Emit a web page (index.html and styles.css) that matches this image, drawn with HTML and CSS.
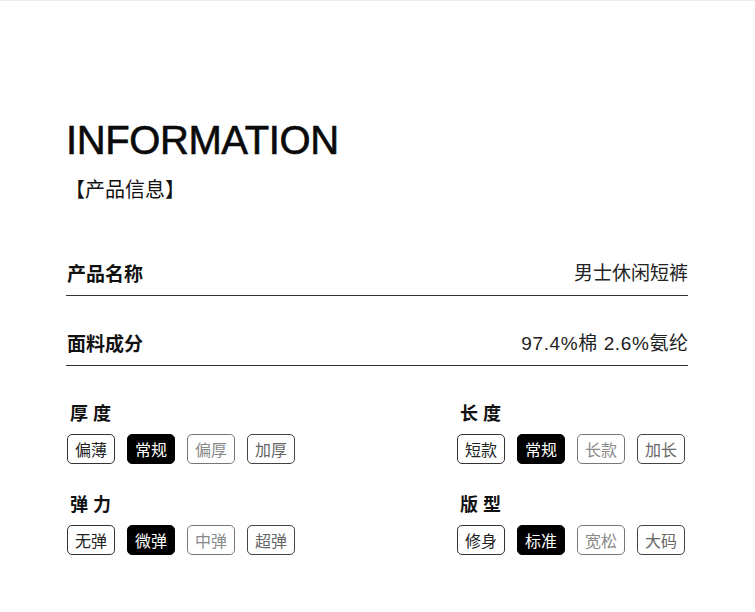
FILE: index.html
```html
<!DOCTYPE html>
<html lang="zh-CN">
<head>
<meta charset="utf-8">
<title>INFORMATION</title>
<link rel="stylesheet" href="styles.css">
</head>
<body>
<div class="page">
  <h1 class="title">INFORMATION</h1>
  <div class="subtitle">【产品信息】</div>

  <div class="row row-first">
    <span class="label">产品名称</span>
    <span class="value">男士休闲短裤</span>
  </div>
  <div class="row row-second">
    <span class="label">面料成分</span>
    <span class="value value-wide">97.4%棉 2.6%氨纶</span>
  </div>

  <div class="grid">
    <div class="group">
      <div class="group-title">厚 度</div>
      <div class="tags">
        <span class="tag">偏薄</span>
        <span class="tag tag-on">常规</span>
        <span class="tag tag-light">偏厚</span>
        <span class="tag tag-mid">加厚</span>
      </div>
    </div>
    <div class="group">
      <div class="group-title">长 度</div>
      <div class="tags">
        <span class="tag">短款</span>
        <span class="tag tag-on">常规</span>
        <span class="tag tag-light">长款</span>
        <span class="tag tag-mid">加长</span>
      </div>
    </div>
    <div class="group">
      <div class="group-title">弹 力</div>
      <div class="tags">
        <span class="tag">无弹</span>
        <span class="tag tag-on">微弹</span>
        <span class="tag tag-light">中弹</span>
        <span class="tag tag-mid">超弹</span>
      </div>
    </div>
    <div class="group">
      <div class="group-title">版 型</div>
      <div class="tags">
        <span class="tag">修身</span>
        <span class="tag tag-on">标准</span>
        <span class="tag tag-light">宽松</span>
        <span class="tag tag-mid">大码</span>
      </div>
    </div>
  </div>
</div>
</body>
</html>
```

FILE: styles.css
```css
html, body {
  margin: 0;
  padding: 0;
  background: #ffffff;
}

body {
  font-family: "Liberation Sans", "Noto Sans CJK SC", sans-serif;
  color: #111;
  border-top: 1px solid #eeeeee;
}

.page {
  width: 622px;
  padding: 0 0 0 66px;
}

.title {
  margin: 115px 0 0 0;
  font-size: 40px;
  line-height: 48px;
  font-weight: normal;
  color: #0a0a0a;
  letter-spacing: -0.4px;
  -webkit-text-stroke: 0.6px #0a0a0a;
}

.subtitle {
  margin-top: 14px;
  font-family: "Noto Sans CJK SC", sans-serif;
  font-size: 20px;
  line-height: 21px;
  color: #111;
  margin-left: -1px;
}

.row {
  display: flex;
  justify-content: space-between;
  align-items: center;
  border-bottom: 1px solid #333;
  padding-bottom: 12px;
  font-size: 19px;
  line-height: 19px;
}

.row-first {
  margin-top: 65px;
}

.row-second {
  margin-top: 38px;
}

.label {
  font-family: "Noto Sans CJK SC", sans-serif;
  font-weight: bold;
  color: #111;
  padding-left: 1px;
  margin-top: -2px;
}

.value {
  color: #222;
  font-size: 19px;
}

.value-wide {
  letter-spacing: 0.6px;
  margin-right: -0.6px;
}

.grid {
  display: grid;
  grid-template-columns: 390px 232px;
  row-gap: 30px;
  margin-top: 37px;
  font-family: "Noto Sans CJK SC", sans-serif;
}

.group {
  padding-left: 1px;
}

.group-title {
  font-size: 18px;
  line-height: 18px;
  font-weight: bold;
  color: #111;
  padding-left: 3px;
  word-spacing: 1px;
}

.tags {
  display: flex;
  gap: 12px;
  margin-top: 13px;
}

.tag {
  box-sizing: border-box;
  width: 48px;
  height: 30px;
  border: 1px solid #333;
  border-radius: 5px;
  display: flex;
  align-items: center;
  justify-content: center;
  font-size: 16px;
  color: #222;
}

.tag-on {
  background: #000;
  border-color: #000;
  color: #fff;
}

.tag-light {
  border-color: #777;
  color: #8a8a8a;
}

.tag-mid {
  border-color: #444;
  color: #666;
}
```
